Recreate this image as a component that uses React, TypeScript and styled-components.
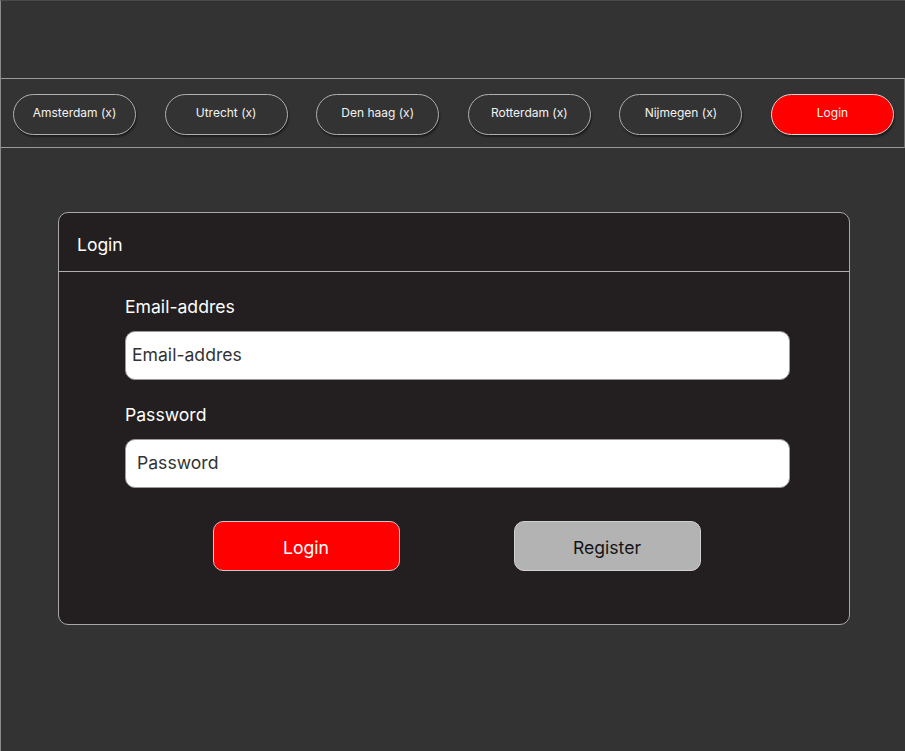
import React from "react";
import styled, { createGlobalStyle } from "styled-components";

const Global = createGlobalStyle`
  html, body { margin: 0; padding: 0; background: #333333; }
  * { box-sizing: border-box; }
`;

const Page = styled.div`
  min-height: 751px;
  background: #333333;
  border-top: 1px solid #4a4a4a;
  border-left: 1px solid #8a8a8a;
  font-family: Inter, "Liberation Sans", sans-serif;
  padding-top: 77px;
`;

const Nav = styled.nav`
  height: 70px;
  border-top: 1px solid #9a9a9a;
  border-bottom: 1px solid #9a9a9a;
  border-right: 1px solid #6a6a6a;
  display: flex;
  align-items: flex-start;
  justify-content: space-between;
  padding: 15px 10px 0 12px;
`;

const Pill = styled.button<{ $active?: boolean }>`
  width: 123px;
  height: 41px;
  border-radius: 21px;
  border: 1px solid ${(p) => (p.$active ? "#d8d8d8" : "#b0b0b0")};
  background: ${(p) => (p.$active ? "#ff0000" : "#333333")};
  color: #f2f2f2;
  font-family: Inter, "Liberation Sans", sans-serif;
  font-size: 12px;
  box-shadow: 1px 2px 2px rgba(0, 0, 0, 0.45);
  padding: 0 0 4px 0;
  cursor: pointer;
`;

const Card = styled.section`
  width: 792px;
  height: 413px;
  margin: 64px 0 0 57px;
  background: #231f20;
  border: 1px solid #a8a8a8;
  border-radius: 10px;
  display: flex;
  flex-direction: column;
`;

const CardHeader = styled.header`
  height: 59px;
  border-bottom: 1px solid #b0b0b0;
  display: flex;
  align-items: center;
  padding: 4px 0 0 18px;
  color: #ffffff;
  font-size: 17.5px;
`;

const CardBody = styled.div`
  padding: 25px 59px 0 66px;
  display: flex;
  flex-direction: column;
`;

const Label = styled.label<{ $top: number; $bottom: number }>`
  color: #ffffff;
  font-size: 17.6px;
  line-height: 20px;
  margin-top: ${(p) => p.$top}px;
  margin-bottom: ${(p) => p.$bottom}px;
`;

const Input = styled.input<{ $pad: number }>`
  width: 100%;
  height: 49px;
  border-radius: 10px;
  border: 1px solid #9a9a9a;
  background: #ffffff;
  color: #333333;
  font-family: Inter, "Liberation Sans", sans-serif;
  font-size: 17.6px;
  padding: 0 0 3px ${(p) => p.$pad}px;
  outline: none;
  &::placeholder { color: #333333; opacity: 1; }
`;

const Actions = styled.div`
  display: flex;
  justify-content: center;
  gap: 114px;
  margin-top: 33px;
  padding-right: 2px;
`;

const ActionButton = styled.button<{ $variant: "primary" | "secondary" }>`
  width: 187px;
  height: 50px;
  border-radius: 10px;
  border: 1px solid ${(p) => (p.$variant === "primary" ? "#c8c8c8" : "#d0d0d0")};
  background: ${(p) => (p.$variant === "primary" ? "#ff0000" : "#b3b3b3")};
  color: ${(p) => (p.$variant === "primary" ? "#ffffff" : "#141414")};
  font-family: Inter, "Liberation Sans", sans-serif;
  font-size: 17.6px;
  padding: 3px 0 0 0;
  cursor: pointer;
`;

const cities = ["Amsterdam (x)", "Utrecht (x)", "Den haag (x)", "Rotterdam (x)", "Nijmegen (x)"];

export default function App() {
  return (
    <>
      <Global />
      <Page>
        <Nav>
          {cities.map((c) => (
            <Pill key={c}>{c}</Pill>
          ))}
          <Pill $active>Login</Pill>
        </Nav>
        <Card>
          <CardHeader>Login</CardHeader>
          <CardBody>
            <Label $top={0} $bottom={14}>Email-addres</Label>
            <Input $pad={6} placeholder="Email-addres" />
            <Label $top={25} $bottom={14}>Password</Label>
            <Input $pad={11} type="password" placeholder="Password" />
            <Actions>
              <ActionButton $variant="primary">Login</ActionButton>
              <ActionButton $variant="secondary">Register</ActionButton>
            </Actions>
          </CardBody>
        </Card>
      </Page>
    </>
  );
}
